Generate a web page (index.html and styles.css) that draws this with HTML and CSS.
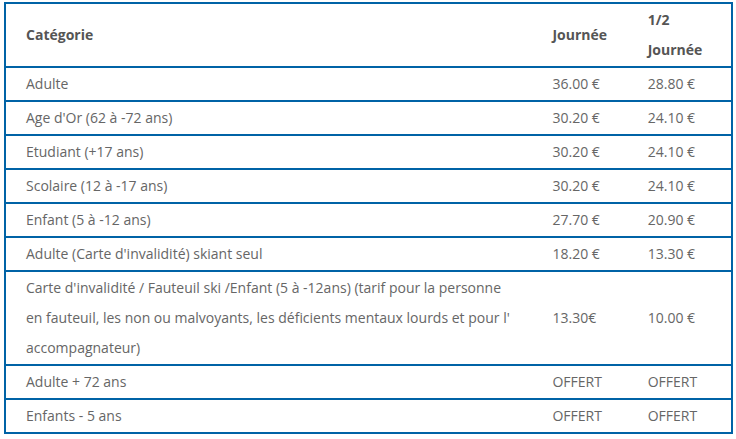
FILE: index.html
```html
<!DOCTYPE html>
<html lang="fr">
<head>
<meta charset="utf-8">
<link rel="stylesheet" href="styles.css">
</head>
<body>
<table class="tarifs">
  <colgroup>
    <col class="c-cat">
    <col class="c-day">
    <col class="c-half">
  </colgroup>
  <thead>
    <tr>
      <th>Catégorie</th>
      <th>Journée</th>
      <th>1/2 Journée</th>
    </tr>
  </thead>
  <tbody>
    <tr><td>Adulte</td><td>36.00 €</td><td>28.80 €</td></tr>
    <tr><td>Age d'Or (62 à -72 ans)</td><td>30.20 €</td><td>24.10 €</td></tr>
    <tr><td>Etudiant (+17 ans)</td><td>30.20 €</td><td>24.10 €</td></tr>
    <tr><td>Scolaire (12 à -17 ans)</td><td>30.20 €</td><td>24.10 €</td></tr>
    <tr><td>Enfant (5 à -12 ans)</td><td>27.70 €</td><td>20.90 €</td></tr>
    <tr><td>Adulte (Carte d'invalidité) skiant seul</td><td>18.20 €</td><td>13.30 €</td></tr>
    <tr><td>Carte d'invalidité / Fauteuil ski /Enfant (5 à -12ans) (tarif pour la personne en fauteuil, les non ou malvoyants, les déficients mentaux lourds et pour l' accompagnateur)</td><td>13.30€</td><td>10.00 €</td></tr>
    <tr><td>Adulte + 72 ans</td><td>OFFERT</td><td>OFFERT</td></tr>
    <tr><td>Enfants - 5 ans</td><td>OFFERT</td><td>OFFERT</td></tr>
  </tbody>
</table>
</body>
</html>
```
FILE: styles.css
```css
html, body {
  margin: 0;
  padding: 0;
  background: #ffffff;
}
body {
  padding: 2px 0 0 4px;
  font-family: "Open Sans", "DejaVu Sans", sans-serif;
  font-size: 14px;
  color: #666666;
}
.tarifs {
  width: 729px;
  border-collapse: collapse;
  table-layout: fixed;
  border: 2px solid #0063a6;
}
.c-cat { width: 526px; }
.c-day { width: 95px; }
.c-half { width: 104px; }
.tarifs th,
.tarifs td {
  text-align: left;
  vertical-align: middle;
  padding: 1px 20px 1px 20px;
  line-height: 30px;
  border-bottom: 2px solid #0063a6;
}
.tarifs th {
  font-weight: 700;
  color: #555555;
}
.tarifs td {
  font-weight: 400;
}
```
